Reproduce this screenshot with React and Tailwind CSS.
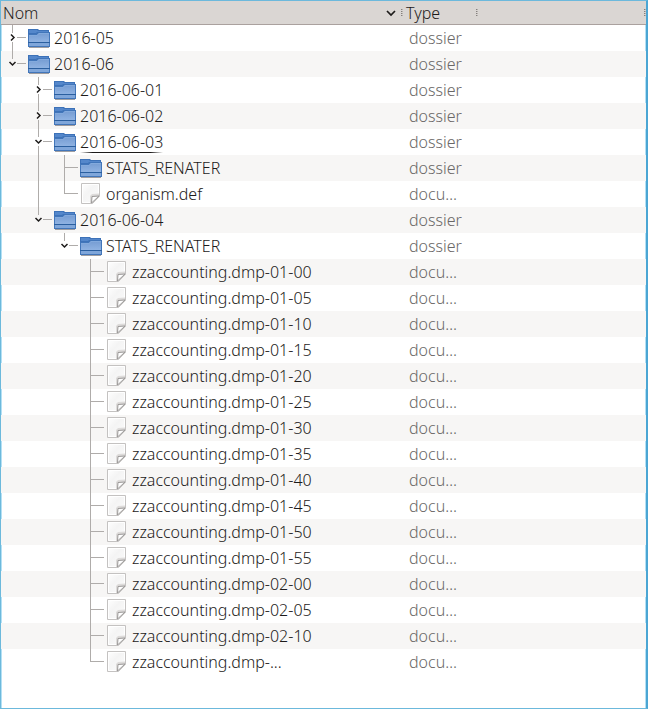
const hours = [
    '01-00', '01-05', '01-10', '01-15', '01-20', '01-25', '01-30', '01-35',
    '01-40', '01-45', '01-50', '01-55', '02-00', '02-05', '02-10', '...',
];

const tree = [
    { name: '2016-05', children: [] },
    {
        name: '2016-06',
        open: true,
        children: [
            { name: '2016-06-01', children: [] },
            { name: '2016-06-02', children: [] },
            {
                name: '2016-06-03',
                open: true,
                current: true,
                children: [
                    { name: 'STATS_RENATER', children: [], empty: true },
                    { name: 'organism.def' },
                ],
            },
            {
                name: '2016-06-04',
                open: true,
                children: [
                    {
                        name: 'STATS_RENATER',
                        open: true,
                        children: hours.map((hour) => ({ name: `zzaccounting.dmp-${hour}` })),
                    },
                ],
            },
        ],
    },
];

// One entry per visible row; rails says for each ancestor level whether its line goes on.
function flatten(nodes, rails = []) {
    return nodes.flatMap((node, index) => {
        const last = index === nodes.length - 1;
        const row = { node, rails, last };
        return node.open ? [row, ...flatten(node.children, [...rails, !last])] : [row];
    });
}

function Rail({ visible }) {
    return (
        <svg className="h-[26px] w-[26px] shrink-0" viewBox="0 0 26 26" aria-hidden="true">
            {visible && <path d="M11 0h1v26h-1z" fill="#afacaa" />}
        </svg>
    );
}

function Elbow({ last }) {
    return (
        <svg className="h-[26px] w-[26px] shrink-0" viewBox="0 0 26 26" fill="#afacaa" aria-hidden="true">
            <path d={last ? 'M11 0h1v13h-1z' : 'M11 0h1v26h-1z'} />
            <path d="M12 12h13v1h-13z" />
        </svg>
    );
}

function Expander({ open, last, name }) {
    return (
        <button type="button" className="shrink-0" aria-expanded={Boolean(open)} aria-label={name}>
            <svg className="block h-[26px] w-[26px]" viewBox="0 0 26 26" fill="#afacaa">
                <path d="M11 0h1v8h-1z" />
                {!last && <path d="M11 17h1v9h-1z" />}
                <path d="M16 12h9v1h-9z" />
                <path
                    d={open ? 'M8.500 11l3 3 3-3' : 'M10 9.500l3 3-3 3'}
                    fill="none"
                    stroke="#1d1b1a"
                    strokeWidth="1.5"
                />
            </svg>
        </button>
    );
}

function FolderIcon() {
    return (
        <svg className="h-[26px] w-[26px] shrink-0" viewBox="0 0 26 26" aria-hidden="true">
            <defs>
                <linearGradient id="folder" x1="0" y1="0" x2="0" y2="1">
                    <stop offset="0" stopColor="#759cd2" />
                    <stop offset="1" stopColor="#8fb2e2" />
                </linearGradient>
            </defs>
            <path d="M2 22h20v1H2z" fill="#77767a" opacity=".7" />
            <path d="M1 4h10l1 1h10v5H1z" fill="#3d72b8" />
            <path d="M2 5h8l1 1h10v1H10l-1 1H2z" fill="#5487cb" />
            <path d="M1 9h8l2-2h12v15H1z" fill="#4276ba" />
            <path d="M2 10h8l2-2h10v9H2z" fill="url(#folder)" />
            <path d="M2 10h8l2-2h10v1H12l-2 2H2z" fill="#83aadd" />
            <path d="M2 18h20v3H2z" fill="#7fa6da" />
            <path d="M1 17h22v1H1z" fill="#2b5f9f" />
        </svg>
    );
}

function DocumentIcon() {
    return (
        <svg className="h-[26px] w-[26px] shrink-0" viewBox="0 0 26 26" aria-hidden="true">
            <defs>
                <linearGradient id="sheet" x1="0" y1="0" x2="1" y2="1">
                    <stop offset="0" stopColor="#ffffff" />
                    <stop offset=".4" stopColor="#f4f4f4" />
                    <stop offset="1" stopColor="#fcfcfc" />
                </linearGradient>
            </defs>
            <path d="M2.500 2.500h18v13l-7 7h-11z" fill="url(#sheet)" stroke="#c4c2c1" />
            <path d="M3.500 3.500h16v12l-6.500 6h-9.500z" fill="none" stroke="#fff" />
            <path d="M11 22v-7l2-2 7-.5v3.500l-7 6.500z" fill="#dddbda" />
            <path d="M12.500 22l.5-6.500 7-.5z" fill="#fff" stroke="#9b9998" />
        </svg>
    );
}

function Grip() {
    return (
        <svg className="h-2 w-0.5 shrink-0" viewBox="0 0 2 8" aria-hidden="true">
            <path d="M0 0h1v1H0zM0 2h1v1H0zM0 4h1v1H0zM0 6h1v1H0z" fill="#85807d" />
            <path d="M1 0h1v1H1zM1 2h1v1H1zM1 4h1v1H1zM1 6h1v1H1z" fill="#b3aeab" />
        </svg>
    );
}

function Row({ node, rails, last }) {
    const folder = Boolean(node.children);
    const expandable = folder && !node.empty;
    return (
        <tr className="h-[26px] even:bg-[#f7f6f5]">
            <td className="p-0">
                <div className="flex h-[26px] items-center">
                    {rails.map((visible, index) => (
                        <Rail key={index} visible={visible} />
                    ))}
                    {expandable ? (
                        <Expander open={node.open} last={last} name={node.name} />
                    ) : (
                        <Elbow last={last} />
                    )}
                    {folder ? <FolderIcon /> : <DocumentIcon />}
                    <span
                        className={
                            node.current
                                ? 'ml-px bg-[linear-gradient(90deg,transparent,#1d1b1a_15%,#1d1b1a_85%,transparent)] bg-[length:100%_1px] bg-bottom bg-no-repeat leading-[22px]'
                                : 'ml-px leading-[22px]'
                        }
                    >
                        {node.name}
                    </span>
                </div>
            </td>
            <td className="p-0 pl-1.5 leading-[22px] text-[#696766]">{folder ? 'dossier' : 'docu…'}</td>
            <td className="p-0" />
        </tr>
    );
}

export default function App() {
    return (
        <div className="min-h-screen border border-r-2 border-[#6cb9dc] border-r-[#4ba6d4] bg-white font-['Noto_Sans','Open_Sans',sans-serif] text-base font-light text-[#1d1b1a] shadow-[inset_1px_0_0_#b4e0f4,inset_-1px_0_0_#b4e0f4]">
            <table className="w-full table-fixed border-separate border-spacing-0">
                <colgroup>
                    <col className="w-[402px]" />
                    <col className="w-[75px]" />
                    <col />
                </colgroup>
                <thead>
                    <tr className="bg-[#dad6d3] text-left">
                        <th className="border-b border-[#aaa19e] p-0 font-light">
                            <button type="button" className="flex h-[23px] w-full items-center gap-1 pl-0.5">
                                <span className="grow text-left">Nom</span>
                                <svg className="h-3 w-3" viewBox="0 0 12 12" aria-hidden="true">
                                    <path d="M2 4l4 4 4-4" fill="none" stroke="#1d1b1a" strokeWidth="1.7" />
                                </svg>
                                <Grip />
                            </button>
                        </th>
                        <th className="border-b border-[#aaa19e] p-0 font-light">
                            <button type="button" className="flex h-[23px] w-full items-center justify-between pl-[3px]">
                                Type
                                <Grip />
                            </button>
                        </th>
                        <th className="border-b border-[#aaa19e] p-0">
                            <div className="flex justify-end">
                                <Grip />
                            </div>
                        </th>
                    </tr>
                </thead>
                <tbody>
                    {flatten(tree).map((row, index) => (
                        <Row key={index} {...row} />
                    ))}
                </tbody>
            </table>
        </div>
    );
}
